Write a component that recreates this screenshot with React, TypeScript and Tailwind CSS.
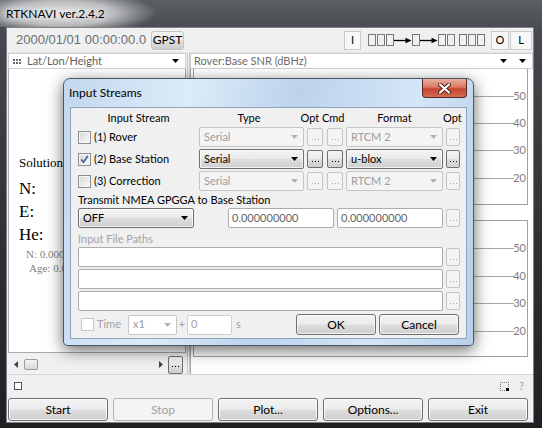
import React from 'react';

const grad =
  'bg-[linear-gradient(to_bottom,#f3f3f3_0%,#ebebeb_48%,#dddddd_52%,#cfcfcf_100%)]';

function Tri({ color = '#000' }: { color?: string }) {
  return (
    <svg width="7" height="4" viewBox="0 0 7 4" className="block shrink-0">
      <path d="M0 0H7L3.5 4Z" fill={color} />
    </svg>
  );
}

function Button({ label, disabled, className = '' }: { label: string; disabled?: boolean; className?: string }) {
  return (
    <div
      className={`flex items-center justify-center rounded-[3px] border text-[12px] ${
        disabled
          ? 'border-[#adb2b5] bg-[#f4f4f4] text-[#a0a0a0]'
          : `border-[#707070] ${grad} text-black shadow-[inset_0_0_0_1px_rgba(255,255,255,0.75)]`
      } ${className}`}
    >
      {label}
    </div>
  );
}

function Combo({ value, disabled, className = '' }: { value: string; disabled?: boolean; className?: string }) {
  return (
    <div
      className={`flex h-[20px] items-center justify-between rounded-[2px] border pl-[4px] pr-[5px] text-[11px] ${
        disabled
          ? 'border-[#c5c5c5] bg-[#f4f4f4] text-[#9d9d9d]'
          : `border-[#707070] ${grad} text-black shadow-[inset_0_0_0_1px_rgba(255,255,255,0.7)]`
      } ${className}`}
    >
      <span>{value}</span>
      <Tri color={disabled ? '#b3b3b3' : '#000'} />
    </div>
  );
}

function Dots({ disabled, className = '' }: { disabled?: boolean; className?: string }) {
  const dot = disabled ? 'bg-[#a8a8a8]' : 'bg-black';
  return (
    <div
      className={`flex h-[18px] shrink-0 items-center justify-center gap-[2px] rounded-[2px] border pt-[4px] ${
        disabled ? 'border-[#c5c5c5] bg-[#f4f4f4]' : `border-[#707070] ${grad}`
      } ${className}`}
    >
      <span className={`h-[1px] w-[1px] ${dot}`} />
      <span className={`h-[1px] w-[1px] ${dot}`} />
      <span className={`h-[1px] w-[1px] ${dot}`} />
    </div>
  );
}

function Check({ checked, disabled }: { checked?: boolean; disabled?: boolean }) {
  return (
    <div
      className={`relative h-[13px] w-[13px] shrink-0 border ${
        disabled
          ? 'border-[#c7c7c7] bg-white'
          : 'border-[#8e8f8f] bg-[linear-gradient(135deg,#d6d6d6,#fbfbfb)] shadow-[inset_0_0_0_1px_#f4f4f4]'
      }`}
    >
      {checked && (
        <svg width="11" height="11" viewBox="0 0 11 11" className="absolute left-0 top-0">
          <path d="M2.2 5.4 L4.5 8.2 L8.8 2" stroke="#4a5e94" strokeWidth="1.7" fill="none" />
        </svg>
      )}
    </div>
  );
}

function Field({ value = '', disabled, className = '' }: { value?: string; disabled?: boolean; className?: string }) {
  return (
    <div
      className={`flex h-[20px] items-center rounded-[2px] border bg-white pl-[3px] text-[11px] ${
        disabled ? 'border-[#cfcfcf] text-[#a0a0a0]' : 'border-[#abadb3] text-[#666]'
      } ${className}`}
    >
      {value}
    </div>
  );
}

function Boxes({ n }: { n: number }) {
  return (
    <div className="flex gap-[1px]">
      {Array.from({ length: n }).map((_, i) => (
        <span key={i} className="h-[12px] w-[8px] border border-[#7a7a7a]" />
      ))}
    </div>
  );
}

function Arrow() {
  return (
    <svg width="18" height="7" viewBox="0 0 18 7" className="block">
      <line x1="0" y1="3.5" x2="13" y2="3.5" stroke="#000" strokeWidth="1.3" />
      <path d="M11.5 0.8 L17.5 3.5 L11.5 6.2 Z" fill="#000" />
    </svg>
  );
}

function SnrChart({ ticks }: { ticks: number[] }) {
  return (
    <svg width="333" height="135" className="block">
      {ticks.map((y, i) => (
        <g key={i}>
          <line x1="0" y1={y + 0.5} x2="320" y2={y + 0.5} stroke="#a8a8a8" />
          <text x="332" y={y + 4} textAnchor="end" fontSize="11" fill="#7c7c7c" fontFamily="Lato, sans-serif">
            {50 - i * 10}
          </text>
        </g>
      ))}
    </svg>
  );
}

function InputStreamsDialog() {
  const rows = [
    { label: '(1) Rover', on: false, fmt: 'RTCM 2' },
    { label: '(2) Base Station', on: true, fmt: 'u-blox' },
    { label: '(3) Correction', on: false, fmt: 'RTCM 2' },
  ];
  return (
    <div className="absolute left-[63px] top-[78px] flex h-[268px] w-[411px] flex-col rounded-t-[7px] rounded-b-[4px] border border-[#4a5566] bg-[linear-gradient(100deg,#c3d8ee_0%,#dcebf8_28%,#bcd3ec_52%,#d4e6f7_78%,#b7cfe9_100%)] shadow-[0_4px_16px_rgba(0,0,0,0.6)]">
      <div className="relative flex h-[28px] items-center pl-[5px] text-[12px] text-black">
        Input Streams
        <div className="absolute right-[6px] top-0 flex h-[19px] w-[45px] items-center justify-center rounded-b-[4px] border border-t-0 border-[#5c2a24] bg-[linear-gradient(to_bottom,#eab0a2_0%,#d97a64_45%,#c3452f_55%,#d36d52_100%)]">
          <svg width="13" height="11" viewBox="0 0 13 11">
            <path d="M2 1.5 L11 9.5 M11 1.5 L2 9.5" stroke="#4d1d16" strokeWidth="4" strokeLinecap="round" />
            <path d="M2 1.5 L11 9.5 M11 1.5 L2 9.5" stroke="#fff" strokeWidth="2.2" strokeLinecap="round" />
          </svg>
        </div>
      </div>
      <div className="mx-[6px] mb-[6px] flex-1 border border-[#8ea3bd] bg-[#f0f0f0] pl-[7px] pt-[3px] text-[11px] text-black">
        <div className="w-[382px]">
          <div className="flex h-[14px] items-center">
            <div className="w-[121px] text-center">Input Stream</div>
            <div className="w-[100px] text-center">Type</div>
            <div className="w-[47px] text-center">Opt Cmd</div>
            <div className="w-[97px] text-center">Format</div>
            <div className="w-[17px] text-right">Opt</div>
          </div>
          {rows.map((r) => (
            <div key={r.label} className="mt-[2px] flex h-[20px] items-center">
              <div className="flex w-[121px] items-center">
                <Check checked={r.on} />
                <span className="ml-[3px]">{r.label}</span>
              </div>
              <Combo value="Serial" disabled={!r.on} className="w-[105px]" />
              <Dots disabled={!r.on} className="ml-[3px] w-[16px]" />
              <Dots disabled={!r.on} className="ml-[4px] w-[16px]" />
              <Combo value={r.fmt} disabled={!r.on} className="ml-[3px] w-[97px]" />
              <Dots disabled={!r.on} className="ml-[3px] w-[14px]" />
            </div>
          ))}
          <div className="mt-[2px] flex h-[14px] items-center">Transmit NMEA GPGGA to Base Station</div>
          <div className="mt-[1px] flex h-[20px] items-center">
            <Combo value="OFF" className="w-[116px]" />
            <Field value="0.000000000" className="ml-[34px] w-[106px]" />
            <Field value="0.000000000" className="ml-[3px] w-[106px]" />
            <Dots disabled className="ml-[3px] w-[14px]" />
          </div>
          <div className="mt-[4px] flex h-[14px] items-center text-[#a3a3a3]">Input File Paths</div>
          {[0, 1, 2].map((i) => (
            <div key={i} className={`${i === 0 ? 'mt-[1px]' : 'mt-[2px]'} flex h-[20px] items-center`}>
              <Field className="w-[365px]" />
              <Dots disabled className="ml-[3px] w-[14px]" />
            </div>
          ))}
          <div className="mt-[3px] flex h-[21px] items-center">
            <div className="flex w-[50px] items-center pl-[3px]">
              <Check disabled />
              <span className="ml-[3px] text-[#a3a3a3]">Time</span>
            </div>
            <Combo value="x1" disabled className="w-[49px] bg-white" />
            <span className="w-[10px] text-center text-[#a3a3a3]">+</span>
            <Field value="0" disabled className="w-[45px]" />
            <span className="ml-[4px] text-[#a3a3a3]">s</span>
            <Button label="OK" className="ml-auto h-[21px] w-[80px]" />
            <Button label="Cancel" className="ml-[3px] mr-[1px] h-[21px] w-[80px]" />
          </div>
        </div>
      </div>
    </div>
  );
}

export default function App() {
  return (
    <div className="relative h-[428px] w-[542px] overflow-hidden bg-[linear-gradient(to_bottom,#5b5e62_0%,#45484c_8%,#2d2f32_60%,#1f2023_100%)] font-['Lato',sans-serif]">
      <div className="flex h-[27px] items-center bg-[radial-gradient(ellipse_95px_22px_at_62px_13px,#e4e4e4_0%,#b9bbbd_55%,transparent_100%)] pl-[6px]">
        <span className="text-[12px] text-black [text-shadow:0_0_6px_#fff,0_0_10px_#fff]">RTKNAVI ver.2.4.2</span>
      </div>

      <div className="ml-[6px] flex h-[396px] w-[528px] flex-col border border-[#7d8288] bg-[#f0f0f0]">
        {/* time / status row */}
        <div className="flex h-[25px] items-center border-b border-[#e2e2e2]">
          <span className="w-[144px] pl-[9px] font-['Liberation_Sans',sans-serif] text-[13px] text-[#6d6d6d]">
            2000/01/01 00:00:00.0
          </span>
          <Button label="GPST" className="h-[19px] w-[33px] border-[#c4c4c4] bg-[#f6f6f6] text-[11px] shadow-none" />
          <div className="flex-1" />
          <div className="flex h-[19px] w-[17px] items-center justify-center border border-[#cacaca] bg-[#f7f7f7] text-[11px]">I</div>
          <div className="ml-[7px] flex w-[119px] items-center">
            <Boxes n={3} />
            <Arrow />
            <Boxes n={1} />
            <Arrow />
            <Boxes n={2} />
            <div className="ml-[4px]">
              <Boxes n={3} />
            </div>
          </div>
          <div className="ml-[4px] flex h-[19px] w-[18px] items-center justify-center border border-[#cacaca] bg-[#f7f7f7] text-[11px]">O</div>
          <div className="ml-[1px] mr-[1px] flex h-[19px] w-[22px] items-center justify-center border border-[#cacaca] bg-[#f7f7f7] text-[11px]">L</div>
        </div>

        {/* panels */}
        <div className="flex h-[321px]">
          <div className="flex w-[180px] flex-col">
            <div className="ml-[1px] flex h-[16px] w-[178px] items-center border border-[#cfcfcf] bg-white pl-[4px] pr-[6px] text-[11px] text-[#5e5e5e]">
              <svg width="9" height="5" viewBox="0 0 9 5" className="mr-[5px]">
                {[0, 3, 6].map((x) =>
                  [0, 3].map((y) => <rect key={`${x}-${y}`} x={x} y={y} width="2" height="2" fill="#6a6a6a" />)
                )}
              </svg>
              <span className="flex-1">Lat/Lon/Height</span>
              <Tri />
            </div>
            <div className="ml-[1px] flex h-[284px] w-[178px] flex-col border border-t-0 border-[#a9a9a9] bg-white font-['Liberation_Serif',serif] text-black">
              <div className="mt-[86px] pl-[10px] text-[13px] leading-[16px]">Solution</div>
              <div className="mt-[8px] pl-[10px] text-[17px] leading-[20px]">N:</div>
              <div className="mt-[3px] pl-[10px] text-[17px] leading-[20px]">E:</div>
              <div className="mt-[3px] pl-[10px] text-[17px] leading-[20px]">He:</div>
              <div className="mt-[2px] pl-[17px] text-[11px] leading-[14px] text-[#808080]">N: 0.000</div>
              <div className="pl-[20px] text-[11px] leading-[14px] text-[#808080]">Age: 0.0</div>
            </div>
            <div className="mt-[2px] flex h-[19px] items-center">
              <svg width="4" height="7" viewBox="0 0 4 7" className="ml-[7px]">
                <path d="M4 0V7L0 3.5Z" fill="#444" />
              </svg>
              <div className="ml-[6px] h-[11px] w-[14px] rounded-[2px] border border-[#9a9a9a] bg-[linear-gradient(to_bottom,#f4f4f4,#d8d8d8)]" />
              <div className="flex-1" />
              <svg width="4" height="7" viewBox="0 0 4 7" className="mr-[5px]">
                <path d="M0 0V7L4 3.5Z" fill="#444" />
              </svg>
              <Dots className="mr-[4px] h-[13px] w-[15px]" />
            </div>
          </div>
          <div className="w-[3px] border-l border-r border-[#c9c9c9]" />
          <div className="flex flex-1 flex-col">
            <div className="flex h-[16px] items-center border border-[#cfcfcf] bg-white pl-[3px] pr-[6px] text-[11px] text-[#6d6d6d]">
              <span className="flex-1">Rover:Base SNR (dBHz)</span>
              <Tri />
              <div className="w-[12px]" />
              <Tri />
            </div>
            <div className="flex flex-1 flex-col border-l border-[#a9a9a9] bg-white pl-[2px]">
              <div className="w-[335px] border border-t-0 border-[#a0a0a0]">
                <SnrChart ticks={[27, 54, 81, 109]} />
              </div>
              <div className="mt-[15px] w-[335px] border border-[#a0a0a0]">
                <SnrChart ticks={[27, 55, 82, 110]} />
              </div>
            </div>
          </div>
        </div>

        {/* status bar */}
        <div className="flex h-[23px] items-center border-t border-[#d4d4d4] pl-[7px] pr-[9px]">
          <div className="h-[8px] w-[8px] border border-[#555] bg-white" />
          <div className="flex-1" />
          <div className="relative h-[9px] w-[9px] border border-dotted border-[#777]">
            <div className="absolute -bottom-[1px] -right-[1px] h-[3px] w-[3px] bg-black" />
          </div>
          <span className="ml-[10px] text-[11px] text-[#a0a0a0]">?</span>
        </div>

        {/* buttons */}
        <div className="flex h-[25px] items-center gap-[5px] pl-[1px]">
          <Button label="Start" className="h-[23px] w-[100px]" />
          <Button label="Stop" disabled className="h-[23px] w-[100px]" />
          <Button label="Plot..." className="h-[23px] w-[100px]" />
          <Button label="Options..." className="h-[23px] w-[100px]" />
          <Button label="Exit" className="h-[23px] w-[100px]" />
        </div>
      </div>

      <InputStreamsDialog />
    </div>
  );
}
